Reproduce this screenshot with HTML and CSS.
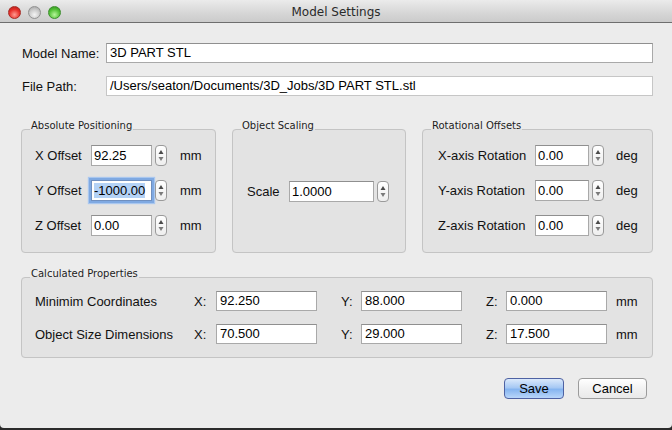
FILE: index.html
```html
<!DOCTYPE html>
<html>
<head>
    <link rel="stylesheet" href="styles.css">
</head>
<body>
    <div class="window">
        <!-- title bar -->
        <div class="titlebar">
            <div class="lights">
                <span class="light red"></span>
                <span class="light gray"></span>
                <span class="light green"></span>
            </div>
            <div class="title">Model Settings</div>
            <div></div>
        </div>

        <div class="content">
            <div class="field-row">
                <div class="row-label">Model Name:</div>
                <div class="field wide">3D PART STL</div>
            </div>
            <div class="field-row second">
                <div class="row-label">File Path:</div>
                <div class="field wide readonly">/Users/seaton/Documents/3D_Jobs/3D PART STL.stl</div>
            </div>

            <div class="groups">
                <fieldset class="group abs">
                    <legend>Absolute Positioning</legend>
                    <div class="spin-rows">
                        <div class="spin-row">
                            <div class="spin-label">X Offset</div>
                            <div class="field num">92.25</div>
                            <div class="spinner"><svg width="10" height="19" viewBox="0 0 10 19"><path d="M2.5 8 L7.5 8 L5 4 Z" fill="#4a4a4a"/><path d="M2.5 11 L7.5 11 L5 15 Z" fill="#7a7a7a"/></svg></div>
                            <div class="unit">mm</div>
                        </div>
                        <div class="spin-row">
                            <div class="spin-label">Y Offset</div>
                            <div class="field num focused"><span class="sel">-1000.00</span></div>
                            <div class="spinner"><svg width="10" height="19" viewBox="0 0 10 19"><path d="M2.5 8 L7.5 8 L5 4 Z" fill="#4a4a4a"/><path d="M2.5 11 L7.5 11 L5 15 Z" fill="#7a7a7a"/></svg></div>
                            <div class="unit">mm</div>
                        </div>
                        <div class="spin-row">
                            <div class="spin-label">Z Offset</div>
                            <div class="field num">0.00</div>
                            <div class="spinner"><svg width="10" height="19" viewBox="0 0 10 19"><path d="M2.5 8 L7.5 8 L5 4 Z" fill="#4a4a4a"/><path d="M2.5 11 L7.5 11 L5 15 Z" fill="#7a7a7a"/></svg></div>
                            <div class="unit">mm</div>
                        </div>
                    </div>
                </fieldset>

                <fieldset class="group scale">
                    <legend>Object Scaling</legend>
                    <div class="spin-rows">
                        <div class="spin-row">
                            <div class="spin-label">Scale</div>
                            <div class="field num">1.0000</div>
                            <div class="spinner"><svg width="10" height="19" viewBox="0 0 10 19"><path d="M2.5 8 L7.5 8 L5 4 Z" fill="#4a4a4a"/><path d="M2.5 11 L7.5 11 L5 15 Z" fill="#7a7a7a"/></svg></div>
                        </div>
                    </div>
                </fieldset>

                <fieldset class="group rot">
                    <legend>Rotational Offsets</legend>
                    <div class="spin-rows">
                        <div class="spin-row">
                            <div class="spin-label">X-axis Rotation</div>
                            <div class="field num">0.00</div>
                            <div class="spinner"><svg width="10" height="19" viewBox="0 0 10 19"><path d="M2.5 8 L7.5 8 L5 4 Z" fill="#4a4a4a"/><path d="M2.5 11 L7.5 11 L5 15 Z" fill="#7a7a7a"/></svg></div>
                            <div class="unit">deg</div>
                        </div>
                        <div class="spin-row">
                            <div class="spin-label">Y-axis Rotation</div>
                            <div class="field num">0.00</div>
                            <div class="spinner"><svg width="10" height="19" viewBox="0 0 10 19"><path d="M2.5 8 L7.5 8 L5 4 Z" fill="#4a4a4a"/><path d="M2.5 11 L7.5 11 L5 15 Z" fill="#7a7a7a"/></svg></div>
                            <div class="unit">deg</div>
                        </div>
                        <div class="spin-row">
                            <div class="spin-label">Z-axis Rotation</div>
                            <div class="field num">0.00</div>
                            <div class="spinner"><svg width="10" height="19" viewBox="0 0 10 19"><path d="M2.5 8 L7.5 8 L5 4 Z" fill="#4a4a4a"/><path d="M2.5 11 L7.5 11 L5 15 Z" fill="#7a7a7a"/></svg></div>
                            <div class="unit">deg</div>
                        </div>
                    </div>
                </fieldset>
            </div>

            <fieldset class="group calc">
                <legend>Calculated Properties</legend>
                <div class="calc-rows">
                    <div class="calc-row">
                        <div class="calc-label">Minimim Coordinates</div>
                        <div class="axis first">X:</div>
                        <div class="field calc-field">92.250</div>
                        <div class="axis">Y:</div>
                        <div class="field calc-field">88.000</div>
                        <div class="axis">Z:</div>
                        <div class="field calc-field">0.000</div>
                        <div class="calc-unit">mm</div>
                    </div>
                    <div class="calc-row">
                        <div class="calc-label">Object Size Dimensions</div>
                        <div class="axis first">X:</div>
                        <div class="field calc-field">70.500</div>
                        <div class="axis">Y:</div>
                        <div class="field calc-field">29.000</div>
                        <div class="axis">Z:</div>
                        <div class="field calc-field">17.500</div>
                        <div class="calc-unit">mm</div>
                    </div>
                </div>
            </fieldset>

            <div class="buttons">
                <div class="btn primary">Save</div>
                <div class="btn">Cancel</div>
            </div>
        </div>
    </div>
</body>
</html>
```

FILE: styles.css
```css
body {
    margin: 0;
    background: #2b2b2b;
    font-family: "Liberation Sans", Arial, sans-serif;
    font-size: 13px;
    color: #111;
    overflow: hidden;
}

.window {
    width: 672px;
    height: 428px;
    background: #ececec;
    border-radius: 0 0 4px 4px;
    display: flex;
    flex-direction: column;
}

/* title bar */
.titlebar {
    height: 22px;
    border-bottom: 1px solid #6e6e6e;
    background: linear-gradient(#ebebeb, #d6d6d6 60%, #cbcbcb);
    display: grid;
    grid-template-columns: 1fr auto 1fr;
    align-items: center;
}

.lights {
    display: flex;
    gap: 7px;
    padding-left: 8px;
    padding-top: 3px;
}

.light {
    width: 11px;
    height: 11px;
    border-radius: 50%;
}

.light.red {
    background: radial-gradient(circle at 50% 70%, #ff9c92, #e8302a 55%, #a81d18);
    border: 1px solid #a62a24;
}

.light.gray {
    background: radial-gradient(circle at 50% 70%, #f4f4f4, #c9c9c9 55%, #9c9c9c);
    border: 1px solid #929292;
}

.light.green {
    background: radial-gradient(circle at 50% 70%, #b7f59b, #55c238 55%, #2d8a1c);
    border: 1px solid #3b8e2c;
}

.title {
    font-family: "DejaVu Sans", sans-serif;
    font-size: 12px;
    color: #2a2a2a;
    padding-top: 2px;
}

.content {
    padding: 20px 19px 0 21px;
}

/* name / path rows */
.field-row {
    display: flex;
    align-items: center;
}

.field-row.second {
    margin-top: 13px;
}

.row-label {
    width: 84px;
    padding-left: 1px;
}

.field {
    height: 20px;
    line-height: 20px;
    box-sizing: border-box;
    background: #fff;
    border: 1px solid #a9a9a9;
    border-top-color: #8f8f8f;
    padding-left: 3px;
    white-space: nowrap;
    overflow: hidden;
    color: #000;
}

.field.wide {
    flex: 1;
    line-height: 18px;
}

.field.readonly {
    border-color: #c6c6c6;
}

/* group boxes */
.groups {
    display: flex;
    gap: 16px;
    margin-top: 23px;
}

.group {
    margin: 0;
    padding: 0;
    min-width: 0;
    border: 1px solid #c4c4c4;
    border-radius: 4px;
    background: #e3e3e3;
}

.group legend {
    font-family: "DejaVu Sans", sans-serif;
    font-size: 10px;
    line-height: 13px;
    color: #1c1c1c;
    margin-left: 8px;
    padding: 0 1px 7px;
}

.abs {
    width: 195px;
    box-sizing: border-box;
}

.scale {
    width: 174px;
    box-sizing: border-box;
}

.rot {
    width: 231px;
    box-sizing: border-box;
}

.spin-rows {
    display: flex;
    flex-direction: column;
    gap: 14px;
    padding: 6px 0 16px 13px;
}

.scale .spin-rows {
    padding: 42px 0 0 14px;
}

.rot .spin-rows {
    padding-left: 15px;
}

.spin-row {
    display: flex;
    align-items: center;
    height: 21px;
}

.spin-label {
    width: 56px;
}

.scale .spin-label {
    width: 42px;
}

.rot .spin-label {
    width: 97px;
}

.field.num {
    width: 61px;
    height: 21px;
    line-height: 19px;
    padding-left: 2px;
}

.scale .field.num {
    width: 85px;
}

.rot .field.num {
    width: 54px;
}

.field.focused {
    box-shadow: 0 0 0 2px #7fa9e2, 0 0 1px 3px #a9c7ef;
    border-color: #6f8fbf;
}

.sel {
    background: #b4d2f6;
}

.spinner {
    width: 12px;
    height: 21px;
    box-sizing: border-box;
    margin-left: 3px;
    border: 1px solid #9a9a9a;
    border-radius: 4px;
    background: linear-gradient(#ffffff, #eeeeee);
    display: flex;
    align-items: center;
    justify-content: center;
}

.unit {
    margin-left: 13px;
}

.rot .unit {
    margin-left: 12px;
}

/* calculated properties */
.calc {
    margin-top: 14px;
}

.calc-rows {
    display: flex;
    flex-direction: column;
    gap: 13px;
    padding: 4px 0 13px 13px;
}

.calc-row {
    display: flex;
    align-items: center;
    height: 20px;
}

.calc-label {
    width: 159px;
}

.axis {
    width: 20px;
    margin-left: 24px;
}

.axis.first {
    width: 22px;
    margin-left: 0;
}

.calc-field {
    width: 101px;
    line-height: 18px;
}

.calc-unit {
    margin-left: 9px;
}

/* buttons */
.buttons {
    display: flex;
    justify-content: flex-end;
    gap: 14px;
    margin-top: 20px;
    padding-right: 6px;
}

.btn {
    height: 21px;
    box-sizing: border-box;
    line-height: 19px;
    text-align: center;
    width: 69px;
    border: 1px solid #9b9b9b;
    border-radius: 4px;
    background: linear-gradient(#ffffff, #f2f2f2 50%, #e9e9e9);
    color: #000;
}

.btn.primary {
    width: 60px;
    border-color: #4e62a3;
    background: linear-gradient(#dbe9fb, #a7c9f4 45%, #86b5f0 55%, #b9d6fa);
}
```
